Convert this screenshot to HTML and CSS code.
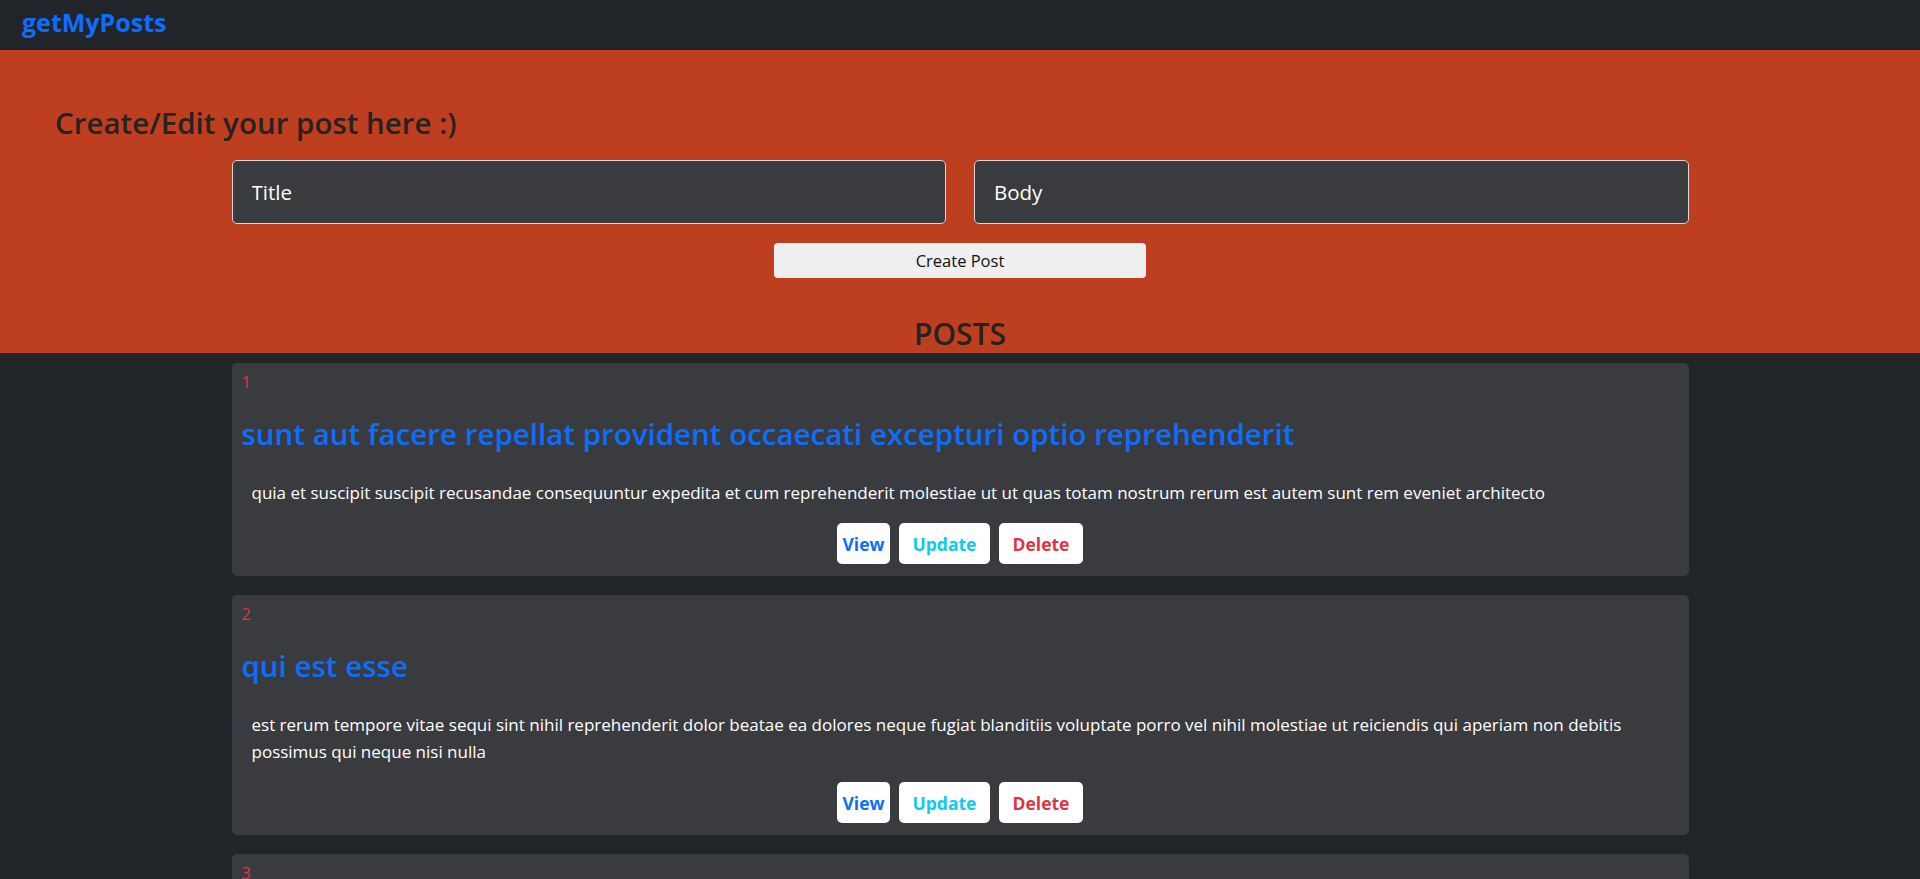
FILE: index.html
```html
<!DOCTYPE html>
<html lang="en">
<head>
<meta charset="utf-8">
<title>getMyPosts</title>
<link rel="stylesheet" href="styles.css">
</head>
<body>
<nav class="navbar">
  <a class="brand" href="#">getMyPosts</a>
</nav>

<section class="hero">
  <h3 class="hero-title">Create/Edit your post here :)</h3>
  <form class="post-form">
    <div class="form-row">
      <input class="field" type="text" placeholder="Title">
      <input class="field" type="text" placeholder="Body">
    </div>
    <button class="create-btn" type="button">Create Post</button>
  </form>
  <h2 class="posts-heading">POSTS</h2>
</section>

<main class="posts">
  <article class="card">
    <div class="post-id">1</div>
    <h2 class="post-title">sunt aut facere repellat provident occaecati excepturi optio reprehenderit</h2>
    <p class="post-body">quia et suscipit suscipit recusandae consequuntur expedita et cum reprehenderit molestiae ut ut quas totam nostrum rerum est autem sunt rem eveniet architecto</p>
    <div class="actions">
      <button class="act act-view" type="button">View</button>
      <button class="act act-update" type="button">Update</button>
      <button class="act act-delete" type="button">Delete</button>
    </div>
  </article>

  <article class="card">
    <div class="post-id">2</div>
    <h2 class="post-title">qui est esse</h2>
    <p class="post-body">est rerum tempore vitae sequi sint nihil reprehenderit dolor beatae ea dolores neque fugiat blanditiis voluptate porro vel nihil molestiae ut reiciendis qui aperiam non debitis possimus qui neque nisi nulla</p>
    <div class="actions">
      <button class="act act-view" type="button">View</button>
      <button class="act act-update" type="button">Update</button>
      <button class="act act-delete" type="button">Delete</button>
    </div>
  </article>

  <article class="card">
    <div class="post-id">3</div>
    <h2 class="post-title">ea molestias quasi exercitationem repellat qui ipsa sit aut</h2>
    <p class="post-body">et iusto sed quo iure voluptatem occaecati omnis eligendi aut ad voluptatem doloribus vel accusantium quis pariatur molestiae porro eius odio et labore et velit aut</p>
    <div class="actions">
      <button class="act act-view" type="button">View</button>
      <button class="act act-update" type="button">Update</button>
      <button class="act act-delete" type="button">Delete</button>
    </div>
  </article>
</main>
</body>
</html>
```

FILE: styles.css
```css
* {
  box-sizing: border-box;
}

html, body {
  margin: 0;
  padding: 0;
}

body {
  background: #212529;
  font-family: "Open Sans", "Noto Sans", sans-serif;
  color: #ffffff;
}

.navbar {
  height: 50px;
  display: flex;
  align-items: flex-start;
  padding: 7px 0 0 22px;
  background: #212529;
}

.brand {
  font-size: 25px;
  font-weight: 700;
  color: #0d6efd;
  text-decoration: none;
  line-height: 30px;
}

.hero {
  background: #bd3f20;
  padding-top: 53px;
  height: 303px;
}

.hero-title {
  margin: 0 0 0 55px;
  font-size: 29.5px;
  font-weight: 600;
  line-height: 40px;
  color: #25221f;
}

.post-form {
  width: 1457px;
  margin: 17px auto 0;
}

.form-row {
  display: flex;
  gap: 28px;
}

.field {
  flex: 1;
  height: 64px;
  background: #3a3b3f;
  border: 1px solid #dcd6d4;
  border-radius: 5px;
  padding: 0 19px;
  font-family: inherit;
  font-size: 20.5px;
  color: #ffffff;
  outline: none;
}

.field::placeholder {
  color: #ffffff;
  opacity: 1;
}

.create-btn {
  display: block;
  width: 372px;
  height: 35px;
  margin: 19px auto 0;
  background: #efefef;
  border: none;
  border-radius: 4px;
  font-family: inherit;
  font-size: 16.5px;
  color: #111111;
  padding: 0;
}

.posts-heading {
  margin: 38px 0 0;
  text-align: center;
  font-size: 30px;
  font-weight: 600;
  line-height: 36px;
  color: #25221f;
}

.posts {
  width: 1457px;
  margin: 10px auto 0;
  display: flex;
  flex-direction: column;
  gap: 19px;
  padding-bottom: 20px;
}

.card {
  background: #3a3b3f;
  border-radius: 5px;
  padding: 7px 10px 12px;
}

.post-id {
  font-size: 16.5px;
  line-height: 24px;
  color: #dc3545;
}

.post-title {
  margin: 22px 0 0;
  font-size: 29.5px;
  font-weight: 600;
  line-height: 36px;
  color: #0d6efd;
}

.post-body {
  margin: 27px 0 0;
  padding: 0 10px;
  font-size: 17px;
  line-height: 27px;
  color: #ffffff;
}

.actions {
  display: flex;
  justify-content: center;
  gap: 9px;
  margin-top: 17px;
}

.act {
  height: 41px;
  background: #ffffff;
  border: none;
  border-radius: 5px;
  font-family: inherit;
  font-size: 17.5px;
  font-weight: 700;
  padding: 0;
}

.act-view {
  width: 53px;
  color: #0d6efd;
}

.act-update {
  width: 91px;
  color: #0dcaf0;
}

.act-delete {
  width: 84px;
  color: #dc3545;
}
```
